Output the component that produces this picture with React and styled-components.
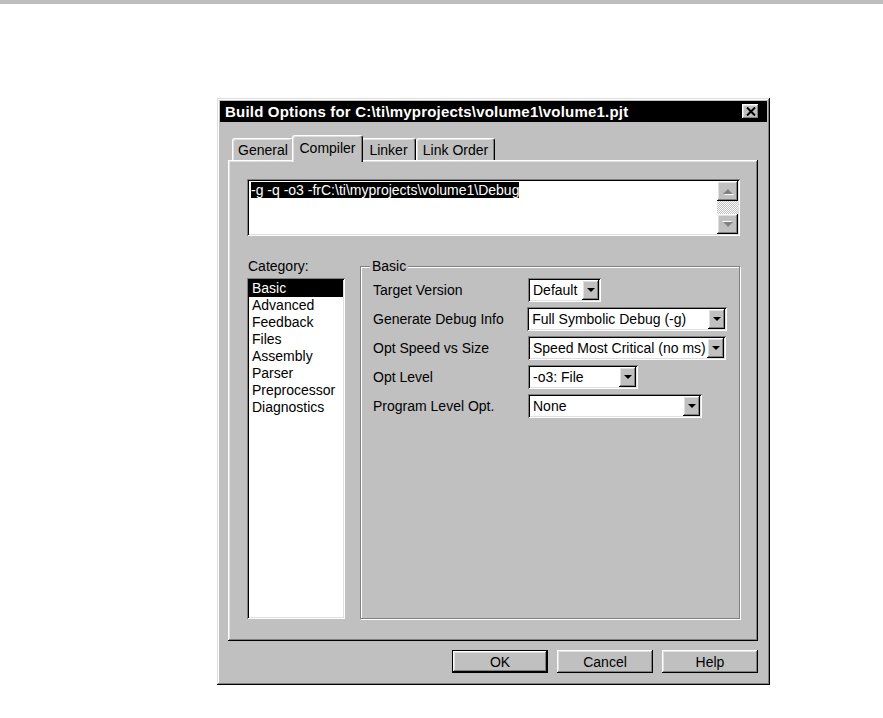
import styled, { createGlobalStyle } from 'styled-components';

const GlobalStyle = createGlobalStyle`
    body {
        margin: 0;
        background: #fff;
        font-family: 'Liberation Sans', Arial, sans-serif;
        color: #000;
    }
`;

const raised = `
    box-shadow: inset -1px -1px #000, inset 1px 1px #fff, inset -2px -2px #808080, inset 2px 2px #dfdfdf;
`;

const sunken = `
    box-shadow: inset 1px 1px #808080, inset -1px -1px #fff, inset 2px 2px #000, inset -2px -2px #dfdfdf;
`;

const TopRule = styled.div`
    height: 4px;
    background: #bebebe;
`;

const Page = styled.div`
    padding: 94px 0 0 217px;
`;

const Window = styled.div`
    width: 553px;
    box-sizing: border-box;
    padding: 3px;
    background: #c0c0c0;
    box-shadow: inset -1px -1px #000, inset 1px 1px #dfdfdf, inset -2px -2px #808080, inset 2px 2px #fff;
`;

const TitleBar = styled.div`
    height: 21px;
    background: #000;
    color: #fff;
    display: flex;
    align-items: center;
    justify-content: space-between;
    padding: 0 8px 0 5px;
`;

const TitleText = styled.span`
    font-weight: bold;
    font-size: 15px;
    letter-spacing: 0.2px;
    white-space: nowrap;
`;

const CloseButton = styled.div`
    width: 17px;
    height: 15px;
    background: #c0c0c0;
    ${raised}
    display: flex;
    align-items: center;
    justify-content: center;
`;

const Body = styled.div`
    padding: 13px 9px 9px 8px;
`;

const TabRow = styled.div`
    display: flex;
    align-items: flex-end;
    height: 25px;
    padding-left: 4px;
`;

const Tab = styled.div`
    position: relative;
    z-index: ${(p) => (p.$active ? 2 : 1)};
    box-sizing: border-box;
    width: ${(p) => p.$width}px;
    height: ${(p) => (p.$active ? 27 : 22)}px;
    margin: ${(p) => (p.$active ? '0 -2px -2px' : '0')};
    padding-top: ${(p) => (p.$active ? 4 : 3)}px;
    background: #c0c0c0;
    border-top: 1px solid #fff;
    border-left: 1px solid #fff;
    border-right: 1px solid #000;
    border-radius: 3px 3px 0 0;
    box-shadow: inset -1px 0 #808080, inset 1px 1px #dfdfdf;
    font-size: 14px;
    line-height: 16px;
    text-align: center;
    white-space: nowrap;
`;

const Panel = styled.div`
    background: #c0c0c0;
    ${raised}
    padding: 19px 18px 22px 19px;
`;

const CommandBox = styled.div`
    height: 57px;
    box-sizing: border-box;
    background: #fff;
    ${sunken}
    padding: 2px;
    display: flex;
`;

const CommandText = styled.div`
    flex: 1;
    padding: 1px 2px;
    font-size: 14px;
    line-height: 16px;
    white-space: nowrap;
`;

const Selected = styled.span`
    background: #000;
    color: #fff;
`;

const ScrollBar = styled.div`
    width: 21px;
    display: flex;
    flex-direction: column;
`;

const ScrollButton = styled.div`
    height: 20px;
    background: #c0c0c0;
    ${raised}
    display: flex;
    align-items: center;
    justify-content: center;
`;

const ScrollTrack = styled.div`
    flex: 1;
    background: repeating-conic-gradient(#c0c0c0 0 25%, #fff 0 50%) 0 0 / 2px 2px;
`;

const Columns = styled.div`
    display: flex;
    gap: 15px;
    margin-top: 22px;
    height: 361px;
`;

const CategoryColumn = styled.div`
    width: 98px;
    display: flex;
    flex-direction: column;
`;

const CategoryLabel = styled.div`
    font-size: 14px;
    line-height: 16px;
    padding-left: 1px;
    margin-bottom: 4px;
`;

const ListBox = styled.div`
    flex: 1;
    background: #fff;
    ${sunken}
    padding: 2px;
`;

const ListItem = styled.div`
    font-size: 14px;
    line-height: 17px;
    padding-left: 3px;
    background: ${(p) => (p.$selected ? '#000' : 'transparent')};
    color: ${(p) => (p.$selected ? '#fff' : '#000')};
`;

const GroupBox = styled.fieldset`
    flex: 1;
    min-width: 0;
    margin: 0;
    box-sizing: border-box;
    padding: 4px 12px 0 12px;
    border: 1px solid #808080;
    box-shadow: inset 1px 1px #fff, 1px 1px #fff;
`;

const Legend = styled.legend`
    margin-left: -3px;
    padding: 0 2px;
    background: #c0c0c0;
    font-size: 14px;
    line-height: 16px;
`;

const OptionRow = styled.div`
    display: flex;
    align-items: center;
    height: 24px;
    margin-bottom: 5px;
`;

const OptionLabel = styled.div`
    width: 155px;
    font-size: 14px;
    white-space: nowrap;
`;

const Select = styled.div`
    width: ${(p) => p.$width}px;
    height: 24px;
    box-sizing: border-box;
    background: #fff;
    ${sunken}
    padding: 2px;
    display: flex;
    align-items: stretch;
`;

const SelectValue = styled.div`
    flex: 1;
    padding-left: 3px;
    font-size: 14px;
    line-height: 20px;
    white-space: nowrap;
    overflow: hidden;
`;

const DropButton = styled.div`
    width: 17px;
    background: #c0c0c0;
    ${raised}
    display: flex;
    align-items: center;
    justify-content: center;
`;

const ButtonRow = styled.div`
    display: flex;
    justify-content: flex-end;
    gap: 9px;
    margin-top: 9px;
`;

const DialogButton = styled.div`
    width: 96px;
    height: 23px;
    background: #c0c0c0;
    box-shadow: ${(p) =>
        p.$default
            ? 'inset 0 0 0 1px #000, inset -2px -2px #000, inset 2px 2px #fff, inset -3px -3px #808080, inset 3px 3px #dfdfdf'
            : 'inset -1px -1px #000, inset 1px 1px #fff, inset -2px -2px #808080, inset 2px 2px #dfdfdf'};
    display: flex;
    align-items: center;
    justify-content: center;
    font-size: 14px;
`;

const DownArrow = () => (
    <svg width="8" height="4" viewBox="0 0 8 4">
        <polygon points="0,0 8,0 4,4" fill="#000" />
    </svg>
);

const ScrollArrow = ({ up }) => (
    <svg width="12" height="7" viewBox="0 0 12 7">
        <g transform={up ? '' : 'rotate(180 6 3.5)'}>
            <polygon points="2,7 12,7 7,2" fill="#fff" />
            <polygon points="1,6 11,6 6,1" fill="#808080" />
        </g>
    </svg>
);

const tabs = [
    { label: 'General', width: 62 },
    { label: 'Compiler', width: 71, active: true },
    { label: 'Linker', width: 55 },
    { label: 'Link Order', width: 79 },
];

const categories = ['Basic', 'Advanced', 'Feedback', 'Files', 'Assembly', 'Parser', 'Preprocessor', 'Diagnostics'];

const options = [
    { label: 'Target Version', value: 'Default', width: 73 },
    { label: 'Generate Debug Info', value: 'Full Symbolic Debug (-g)', width: 201 },
    { label: 'Opt Speed vs Size', value: 'Speed Most Critical (no ms)', width: 198 },
    { label: 'Opt Level', value: '-o3: File', width: 110 },
    { label: 'Program Level Opt.', value: 'None', width: 174 },
];

const App = () => {
    return (
        <>
            <GlobalStyle />
            <TopRule />
            <Page>
                <Window>
                    <TitleBar>
                        <TitleText>Build Options for C:\ti\myprojects\volume1\volume1.pjt</TitleText>
                        <CloseButton>
                            <svg width="10" height="9" viewBox="0 0 10 9">
                                <path d="M1 0.5 L9 8.5 M9 0.5 L1 8.5" stroke="#000" strokeWidth="2" />
                            </svg>
                        </CloseButton>
                    </TitleBar>
                    <Body>
                        <TabRow>
                            {tabs.map((t) => (
                                <Tab key={t.label} $width={t.width} $active={t.active}>
                                    {t.label}
                                </Tab>
                            ))}
                        </TabRow>
                        <Panel>
                            <CommandBox>
                                <CommandText>
                                    <Selected>-g -q -o3 -frC:\ti\myprojects\volume1\Debug</Selected>
                                </CommandText>
                                <ScrollBar>
                                    <ScrollButton>
                                        <ScrollArrow up />
                                    </ScrollButton>
                                    <ScrollTrack />
                                    <ScrollButton>
                                        <ScrollArrow />
                                    </ScrollButton>
                                </ScrollBar>
                            </CommandBox>
                            <Columns>
                                <CategoryColumn>
                                    <CategoryLabel>Category:</CategoryLabel>
                                    <ListBox>
                                        {categories.map((c, i) => (
                                            <ListItem key={c} $selected={i === 0}>
                                                {c}
                                            </ListItem>
                                        ))}
                                    </ListBox>
                                </CategoryColumn>
                                <GroupBox>
                                    <Legend>Basic</Legend>
                                    {options.map((o) => (
                                        <OptionRow key={o.label}>
                                            <OptionLabel>{o.label}</OptionLabel>
                                            <Select $width={o.width}>
                                                <SelectValue>{o.value}</SelectValue>
                                                <DropButton>
                                                    <DownArrow />
                                                </DropButton>
                                            </Select>
                                        </OptionRow>
                                    ))}
                                </GroupBox>
                            </Columns>
                        </Panel>
                        <ButtonRow>
                            <DialogButton $default>OK</DialogButton>
                            <DialogButton>Cancel</DialogButton>
                            <DialogButton>Help</DialogButton>
                        </ButtonRow>
                    </Body>
                </Window>
            </Page>
        </>
    );
};

export default App;
